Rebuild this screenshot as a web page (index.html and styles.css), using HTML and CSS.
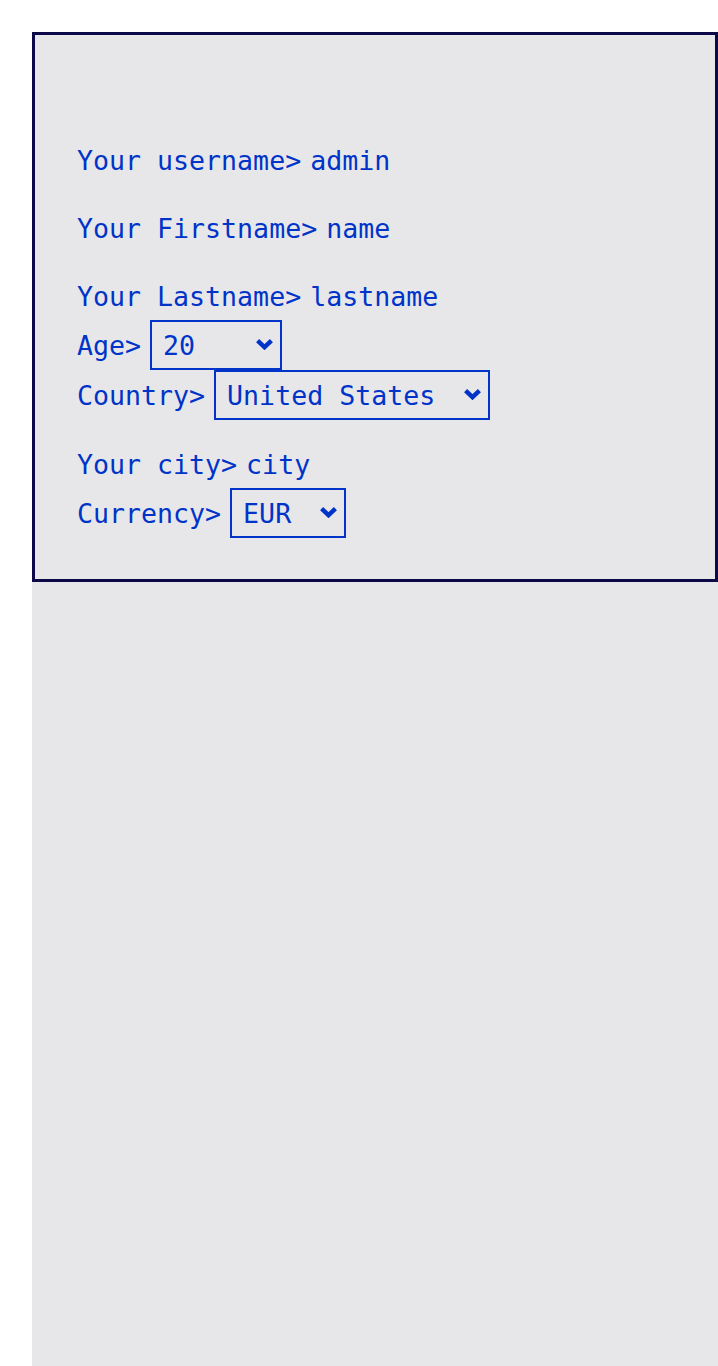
FILE: index.html
```html
<!DOCTYPE html>
<html lang="en">
<head>
<meta charset="utf-8">
<title>Profile</title>
<link rel="stylesheet" href="styles.css">
</head>
<body>
<main class="page">
  <form class="panel">
    <div class="row text-row">
      <label class="label" for="username">Your username&gt;</label>
      <input class="field" id="username" type="text" value="admin">
    </div>
    <div class="row text-row">
      <label class="label" for="firstname">Your Firstname&gt;</label>
      <input class="field" id="firstname" type="text" value="name">
    </div>
    <div class="row text-row">
      <label class="label" for="lastname">Your Lastname&gt;</label>
      <input class="field" id="lastname" type="text" value="lastname">
    </div>
    <div class="row select-row">
      <label class="label" for="age">Age&gt;</label>
      <span class="select-wrap select-age">
        <select class="select" id="age">
          <option>20</option>
          <option>21</option>
          <option>100</option>
        </select>
        <svg class="chevron" viewBox="0 0 19 12" aria-hidden="true"><polyline points="2.6,2.6 9.5,9.2 16.4,2.6"/></svg>
      </span>
    </div>
    <div class="row select-row">
      <label class="label" for="country">Country&gt;</label>
      <span class="select-wrap select-country">
        <select class="select" id="country">
          <option>United States</option>
          <option>France</option>
        </select>
        <svg class="chevron" viewBox="0 0 19 12" aria-hidden="true"><polyline points="2.6,2.6 9.5,9.2 16.4,2.6"/></svg>
      </span>
    </div>
    <div class="row text-row">
      <label class="label" for="city">Your city&gt;</label>
      <input class="field" id="city" type="text" value="city">
    </div>
    <div class="row select-row">
      <label class="label" for="currency">Currency&gt;</label>
      <span class="select-wrap select-currency">
        <select class="select" id="currency">
          <option>EUR</option>
          <option>USD</option>
        </select>
        <svg class="chevron" viewBox="0 0 19 12" aria-hidden="true"><polyline points="2.6,2.6 9.5,9.2 16.4,2.6"/></svg>
      </span>
    </div>
  </form>
</main>
</body>
</html>
```
FILE: styles.css
```css
html, body {
  margin: 0;
  padding: 0;
  background: #ffffff;
}

.page {
  margin: 32px 0 0 32px;
  min-height: 1334px;
  background: #e7e7ea;
  font-family: "DejaVu Sans Mono", "Liberation Mono", monospace;
  font-size: 26.6px;
  color: #0033c8;
}

.panel {
  display: flex;
  flex-direction: column;
  border: 3px solid #0b0948;
  padding: 81px 40px 41px 42px;
  margin: 0;
}

.row {
  display: flex;
  align-items: center;
  gap: 9px;
}

.text-row {
  height: 48px;
  margin-top: 20px;
}

.select-row {
  height: 50px;
}

.label {
  white-space: pre;
}

.field {
  font: inherit;
  color: inherit;
  background: transparent;
  border: none;
  outline: none;
  padding: 0;
  margin: 0;
  width: 300px;
}

.select-wrap {
  position: relative;
  display: inline-block;
  height: 50px;
}

.select {
  appearance: none;
  -webkit-appearance: none;
  box-sizing: border-box;
  height: 50px;
  width: 100%;
  margin: 0;
  padding: 0 40px 0 11px;
  font: inherit;
  color: inherit;
  background: transparent;
  border: 2px solid #0033c8;
  border-radius: 0;
  outline: none;
}

.select-age { width: 132px; }
.select-country { width: 276px; }
.select-currency { width: 116px; }

.chevron {
  position: absolute;
  right: 8px;
  top: 18px;
  width: 19px;
  height: 12px;
  pointer-events: none;
  fill: none;
  stroke: #0033c8;
  stroke-width: 4.4;
  stroke-linecap: butt;
  stroke-linejoin: miter;
}
```
